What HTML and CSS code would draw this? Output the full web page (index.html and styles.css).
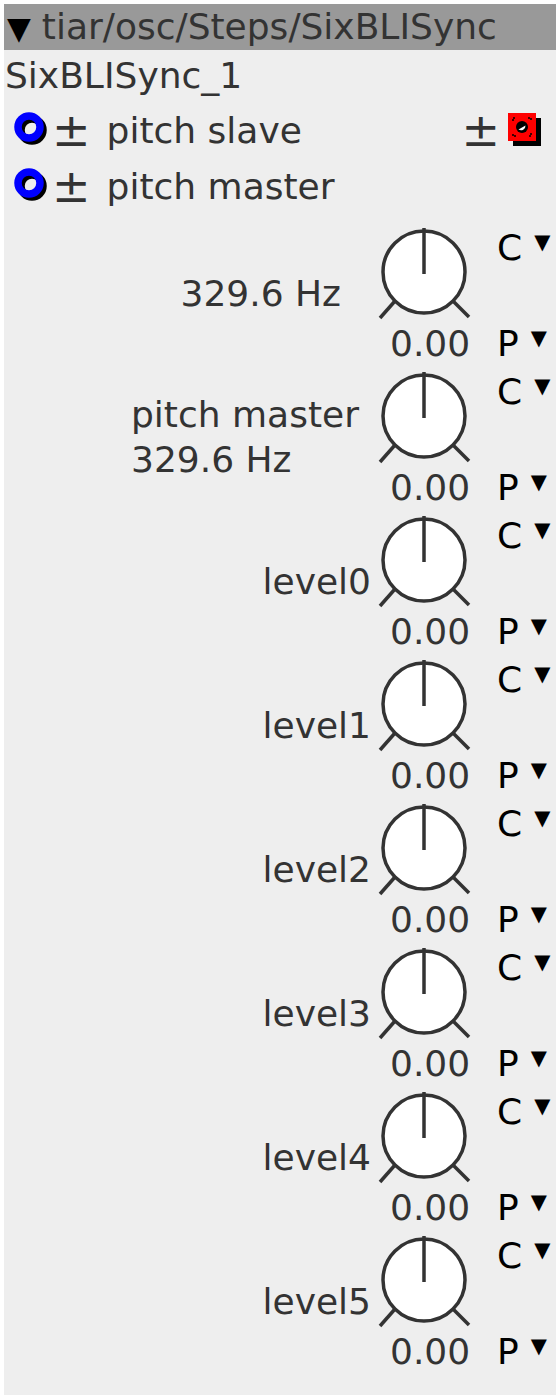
FILE: index.html
```html
<!DOCTYPE html>
<html lang="en">
    <head>
        <meta charset="UTF-8">
        <meta name="viewport" content="width=device-width, initial-scale=1.0">
        <title>SixBLISync</title>
        <link rel="stylesheet" href="styles.css">
    </head>
    <body>
        <div class="module">
            <div class="module-head"><span class="fold">▼</span>tiar/osc/Steps/SixBLISync</div>
            <div class="module-name">SixBLISync_1</div>

            <div class="port-row">
                <svg class="inlet" viewBox="0 0 36 36" width="36" height="36">
                    <circle cx="18" cy="18" r="11" fill="none" stroke="#000" stroke-width="7.5"/>
                    <circle cx="15" cy="15" r="11" fill="none" stroke="#00f" stroke-width="7.5"/>
                </svg>
                <span class="pm">±</span>
                <span class="port-name">pitch slave</span>
                <span class="pm pm-out">±</span>
                <svg class="outlet" viewBox="0 0 34 34" width="34" height="34">
                    <rect x="5" y="5" width="28" height="28" fill="#000"/>
                    <rect x="0" y="0" width="28" height="28" fill="#f00"/>
                    <circle cx="14" cy="14" r="6" fill="#000"/>
                    <path d="M10.5 16.5 A4.5 4.5 0 0 0 17.5 12.5 Z" fill="#fff"/>
                    <path d="M5 8 v-3 h3 M20 5 h3 v3 M23 20 v3 h-3 M8 23 h-3 v-3" stroke="#000" stroke-width="1.5" fill="none" stroke-dasharray="2 1"/>
                </svg>
            </div>
            <div class="port-row">
                <svg class="inlet" viewBox="0 0 36 36" width="36" height="36">
                    <circle cx="18" cy="18" r="11" fill="none" stroke="#000" stroke-width="7.5"/>
                    <circle cx="15" cy="15" r="11" fill="none" stroke="#00f" stroke-width="7.5"/>
                </svg>
                <span class="pm">±</span>
                <span class="port-name">pitch master</span>
            </div>

            <div class="params" id="params"></div>
        </div>

        <script>
            var params = [
                {label: ["329.6 Hz"], cls: "lbl-hz"},
                {label: ["pitch master", "329.6 Hz"], cls: "lbl-two"},
                {label: ["level0"], cls: ""},
                {label: ["level1"], cls: ""},
                {label: ["level2"], cls: ""},
                {label: ["level3"], cls: ""},
                {label: ["level4"], cls: ""},
                {label: ["level5"], cls: ""}
            ];

            // knob: dial, pointer and the two end stops
            var knob = '<svg class="knob" viewBox="0 0 96 96" width="96" height="96">'
                + '<circle cx="46" cy="46" r="41" fill="#fff" stroke="#333" stroke-width="3.5"/>'
                + '<line x1="46" y1="2" x2="46" y2="48" stroke="#333" stroke-width="3.5"/>'
                + '<line x1="17" y1="75" x2="2" y2="92" stroke="#333" stroke-width="3.5"/>'
                + '<line x1="75" y1="75" x2="91" y2="91" stroke="#333" stroke-width="3.5"/>'
                + '</svg>';

            var html = "";
            for (var i = 0; i < params.length; i++) {
                var p = params[i];
                html += '<div class="param">'
                    + '<div class="param-label ' + p.cls + '">' + p.label.join("<br/>") + '</div>'
                    + '<div class="knob-col">' + knob + '<div class="knob-value">0.00</div></div>'
                    + '<div class="cp-col">'
                    + '<div class="cp-item">C<span class="arrow">▼</span></div>'
                    + '<div class="cp-item">P<span class="arrow">▼</span></div>'
                    + '</div>'
                    + '</div>';
            }
            document.getElementById("params").innerHTML = html;
        </script>
    </body>
</html>
```

FILE: styles.css
```css
*{
    margin: 0px;
    padding: 0px;
    box-sizing: border-box;
}
body{
    margin: 4px;
    background-color: #fff;
    font-family: "DejaVu Sans", sans-serif;
    font-size: 36px;
    color: #333;
}
.module{
    width: 552px;
    height: 1391px;
    background-color: #eeeeee;
}
.module-head{
    background-color: #999999;
    height: 46px;
    line-height: 46px;
    padding-left: 3px;
    white-space: nowrap;
    overflow: hidden;
}
.fold{
    font-size: 31px;
    color: #000;
    margin-right: 11px;
}
.module-name{
    height: 52px;
    line-height: 52px;
    padding-left: 1px;
}
.port-row{
    display: flex;
    align-items: center;
    height: 56px;
    padding-left: 10px;
}
.inlet{
    flex: none;
}
.pm{
    font-size: 46px;
    line-height: 46px;
    margin-left: 2px;
}
.port-name{
    margin-left: 16px;
}
.pm-out{
    margin-left: auto;
}
.outlet{
    margin-left: 8px;
    margin-right: 14px;
}
.params{
    padding-top: 12px;
}
.param{
    display: flex;
    height: 144px;
}
.param-label{
    flex: 1;
    align-self: center;
    text-align: right;
    padding-right: 7px;
    padding-bottom: 10px;
    line-height: 45px;
    white-space: nowrap;
}
.lbl-hz{
    padding-right: 37px;
}
.lbl-two{
    text-align: left;
    padding-left: 127px;
}
.knob-col{
    width: 110px;
    display: flex;
    flex-direction: column;
    align-items: flex-start;
}
.knob{
    display: block;
}
.knob-value{
    line-height: 44px;
    margin-left: 12px;
}
.cp-col{
    width: 68px;
    display: flex;
    flex-direction: column;
    justify-content: space-between;
    padding: 4px 0 8px 9px;
    color: #000;
}
.cp-item{
    display: flex;
    align-items: flex-start;
    line-height: 36px;
}
.arrow{
    font-size: 21px;
    line-height: 21px;
    margin-left: 12px;
    margin-top: 2px;
}
```
